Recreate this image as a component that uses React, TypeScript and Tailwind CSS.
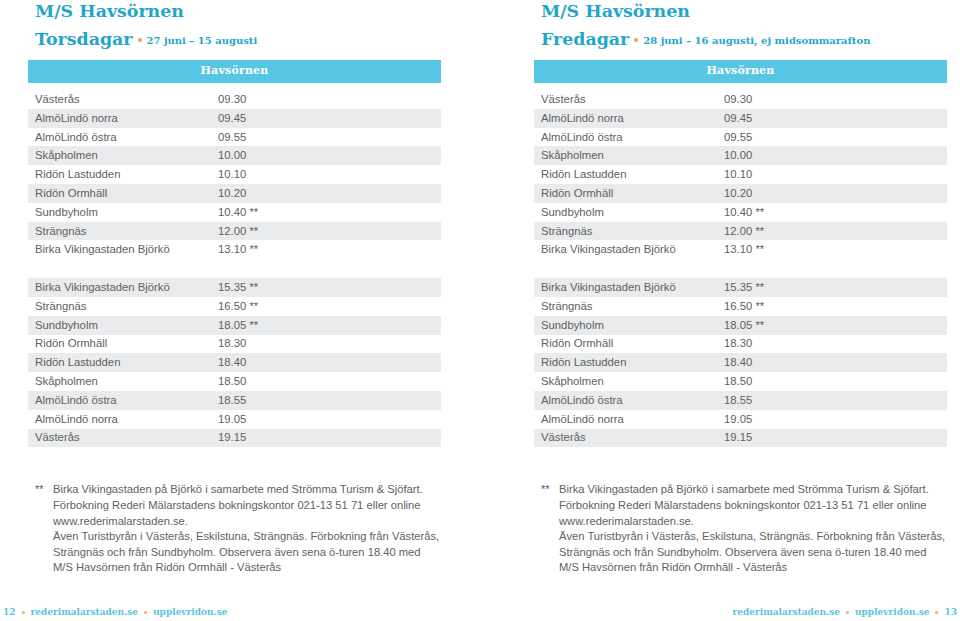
import React from "react";

const morning = [
  ["Västerås", "09.30"],
  ["AlmöLindö norra", "09.45"],
  ["AlmöLindö östra", "09.55"],
  ["Skåpholmen", "10.00"],
  ["Ridön Lastudden", "10.10"],
  ["Ridön Ormhäll", "10.20"],
  ["Sundbyholm", "10.40 **"],
  ["Strängnäs", "12.00 **"],
  ["Birka Vikingastaden Björkö", "13.10 **"],
];

const evening = [
  ["Birka Vikingastaden Björkö", "15.35 **"],
  ["Strängnäs", "16.50 **"],
  ["Sundbyholm", "18.05 **"],
  ["Ridön Ormhäll", "18.30"],
  ["Ridön Lastudden", "18.40"],
  ["Skåpholmen", "18.50"],
  ["AlmöLindö östra", "18.55"],
  ["AlmöLindö norra", "19.05"],
  ["Västerås", "19.15"],
];

const serif = "font-['DejaVu_Serif',serif]";

function Rows({ rows, stripeFirst }: { rows: string[][]; stripeFirst: boolean }) {
  return (
    <div className="flex flex-col">
      {rows.map(([stop, time], i) => (
        <div
          key={i}
          className={`flex h-[18.8px] items-center pl-[7px] text-[11.3px] text-[#606163] ${
            (i % 2 === 0) === stripeFirst ? "bg-[#e9ebec]" : ""
          }`}
        >
          <span className="w-[183px]">{stop}</span>
          <span>{time}</span>
        </div>
      ))}
    </div>
  );
}

function Page({ day, dates }: { day: string; dates: string }) {
  return (
    <div className="w-[413px]">
      <div className={`${serif} pl-[7px] font-bold text-[#1fa6cb]`}>
        <h1 className="mt-[1px] text-[17.4px] leading-[20px]">M/S Havsörnen</h1>
        <div className="mt-[7px] flex items-center">
          <span className="text-[17.4px] leading-[22px]">{day}</span>
          <span className="mx-[5px] mt-[2px] inline-block h-[4px] w-[4px] rounded-full bg-[#f0a24a]" />
          <span className="mt-[2px] text-[10px]">{dates}</span>
        </div>
      </div>
      <div
        className={`${serif} mt-[10px] flex h-[23px] items-center justify-center bg-[#56c6e4] text-[11px] font-bold tracking-[0.2px] text-white`}
      >
        Havsörnen
      </div>
      <div className="mt-[7px]">
        <Rows rows={morning} stripeFirst={false} />
      </div>
      <div className="mt-[19px]">
        <Rows rows={evening} stripeFirst={true} />
      </div>
      <div className="mt-[35px] flex whitespace-nowrap pl-[7px] text-[11.2px] leading-[15.6px] text-[#606163]">
        <span className="w-[18px] shrink-0">**</span>
        <p>
          Birka Vikingastaden på Björkö i samarbete med Strömma Turism & Sjöfart.
          <br />
          Förbokning Rederi Mälarstadens bokningskontor 021-13 51 71 eller online
          <br />
          www.rederimalarstaden.se.
          <br />
          Även Turistbyrån i Västerås, Eskilstuna, Strängnäs. Förbokning från Västerås,
          <br />
          Strängnäs och från Sundbyholm. Observera även sena ö-turen 18.40 med
          <br />
          M/S Havsörnen från Ridön Ormhäll - Västerås
        </p>
      </div>
    </div>
  );
}

function Dot() {
  return <span className="mx-[6px] inline-block h-[3px] w-[3px] rounded-full bg-[#f0b060] align-middle" />;
}

export default function App() {
  return (
    <div className="flex h-[621px] w-[960px] flex-col overflow-hidden bg-white font-['Liberation_Sans',Arial,sans-serif]">
      <div className="flex">
        <div className="w-[480px] pl-[28px]">
          <Page day="Torsdagar" dates="27 juni – 15 augusti" />
        </div>
        <div className="w-[480px] pl-[54px]">
          <Page day="Fredagar" dates="28 juni – 16 augusti, ej midsommarafton" />
        </div>
      </div>
      <div
        className={`${serif} mt-auto mb-[2px] flex justify-between px-[3px] text-[9px] font-bold leading-[14px] text-[#5cc4dc]`}
      >
        <span>
          12<Dot />rederimalarstaden.se<Dot />upplevridon.se
        </span>
        <span>
          rederimalarstaden.se<Dot />upplevridon.se<Dot />13
        </span>
      </div>
    </div>
  );
}
